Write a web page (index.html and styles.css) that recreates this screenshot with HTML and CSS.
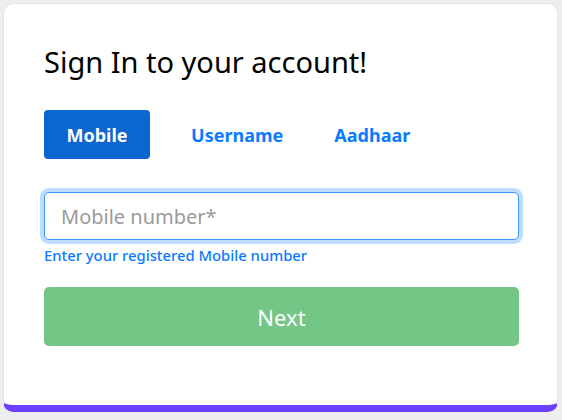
FILE: index.html
```html
<!DOCTYPE html>
<html lang="en">
<head>
<meta charset="utf-8">
<title>Sign In</title>
<link rel="stylesheet" href="styles.css">
</head>
<body>
<main class="card">
  <h2 class="title">Sign In to your account!</h2>
  <nav class="tabs">
    <a class="tab tab-active" href="#">Mobile</a>
    <a class="tab" href="#">Username</a>
    <a class="tab" href="#">Aadhaar</a>
  </nav>
  <form class="form">
    <input class="field" type="text" placeholder="Mobile number*">
    <small class="hint">Enter your registered Mobile number</small>
    <button class="next" type="button" disabled>Next</button>
  </form>
</main>
</body>
</html>
```
FILE: styles.css
```css
html, body {
  margin: 0;
  height: 100%;
}
body {
  background: #eceef0;
  padding: 3px 4px 0 3px;
  box-sizing: border-box;
  font-family: "Noto Sans", "Open Sans", sans-serif;
}
.card {
  display: flex;
  flex-direction: column;
  background: #fff;
  border: 1px solid #e2e4e6;
  border-bottom: 7px solid #6c40fc;
  border-radius: 10px;
  padding: 41px 38px 59px 40px;
}
.title {
  margin: 0;
  font-size: 29px;
  line-height: 34px;
  font-weight: 400;
  color: #000;
}
.tabs {
  display: flex;
  gap: 21px;
  margin-top: 31px;
}
.tab {
  display: flex;
  align-items: center;
  height: 49px;
  padding: 0 10px 0 20px;
  border-radius: 4px;
  font-size: 18px;
  font-weight: 700;
  color: #0a7bff;
  text-decoration: none;
}
.tab-active {
  padding: 0 22.5px;
  background: #0b66d0;
  color: #fff;
}
.form {
  display: flex;
  flex-direction: column;
  margin-top: 33px;
}
.field {
  height: 48px;
  box-sizing: border-box;
  border: 1px solid #3b96ff;
  border-radius: 5px;
  box-shadow: 0 0 0 4px #c0ddff;
  padding: 0 16px;
  font-family: inherit;
  font-size: 20px;
  color: #495057;
  outline: none;
}
.field::placeholder {
  color: #9a9a9a;
}
.hint {
  margin-top: 5px;
  font-size: 14.8px;
  line-height: 21px;
  font-weight: 500;
  color: #0a7bff;
}
.next {
  margin-top: 21px;
  height: 59px;
  border: none;
  border-radius: 5px;
  background: #74c686;
  color: #fff;
  font-family: inherit;
  font-size: 22px;
  cursor: default;
}
```
